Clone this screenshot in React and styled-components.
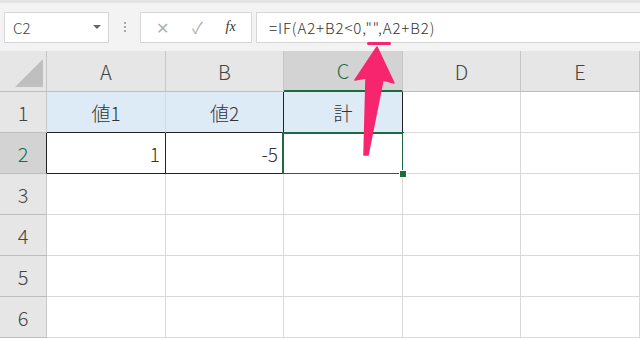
import React from "react";
import styled, { createGlobalStyle } from "styled-components";

const GlobalStyle = createGlobalStyle`
  html, body { margin: 0; padding: 0; background: #fff; }
  body { font-family: "Noto Sans CJK JP", "Noto Sans", sans-serif; }
`;

const Page = styled.div`
  position: relative;
  width: 640px;
  height: 339px;
  overflow: hidden;
`;

const Toolbar = styled.div`
  height: 51px;
  box-sizing: border-box;
  background: #f3f3f3;
  border-top: 3px solid #e4e4e4;
  display: flex;
  align-items: center;
  padding: 0 0 0 4px;
  gap: 4px;
`;

const Box = styled.div`
  height: 31px;
  box-sizing: border-box;
  background: #fff;
  border: 1px solid #d6d6d6;
  display: flex;
  align-items: center;
`;

const NameBox = styled(Box)`
  width: 105px;
  padding: 0 7px 0 8px;
  justify-content: space-between;
  font-size: 15px;
  font-weight: 300;
  color: #444;
`;

const Caret = styled.span`
  width: 0;
  height: 0;
  border-left: 4px solid transparent;
  border-right: 4px solid transparent;
  border-top: 4px solid #666;
`;

const Grip = styled.div`
  width: 23px;
  display: flex;
  flex-direction: column;
  align-items: center;
  gap: 2px;
  span {
    width: 2px;
    height: 2px;
    background: #a8a8a8;
  }
`;

const Buttons = styled(Box)`
  width: 112px;
  justify-content: space-around;
  padding: 0 4px;
  color: #b0b0b0;
  font-size: 16px;
`;

const Fx = styled.span`
  font-family: "Liberation Serif", serif;
  font-style: italic;
  font-size: 14px;
  color: #333;
`;

const Formula = styled(Box)`
  flex: 1;
  border-right: none;
  padding-left: 12px;
  font-size: 15px;
  font-weight: 300;
  color: #333;
  letter-spacing: 0.9px;
`;

const Grid = styled.div`
  display: grid;
  grid-template-columns: 47px 119px 118px 119px 118px 119px;
  grid-auto-rows: 41px;
`;

const Cell = styled.div`
  position: relative;
  box-sizing: border-box;
  display: flex;
  align-items: center;
  justify-content: ${(p) => p.$align || "center"};
  padding: 0 5px;
  font-size: 19px;
  font-weight: 300;
  color: #333;
  background: ${(p) => p.$fill || "#fff"};
  border-right: 1px solid ${(p) => p.$right || "#d9d9d9"};
  border-bottom: 1px solid ${(p) => p.$bottom || "#d9d9d9"};
`;

const Head = styled(Cell)`
  background: ${(p) => (p.$active ? "#d3d3d3" : "#e6e6e6")};
  color: ${(p) => (p.$active ? "#1e6b41" : "#444")};
  border-right: 1px solid ${(p) => p.$right || "#c6c6c6"};
  border-bottom: ${(p) => (p.$active && p.$col ? "2px solid #1e6b41" : `1px solid ${p.$bottom || "#bdbdbd"}`)};
  font-size: 20px;
`;

const Corner = styled(Head)`
  &::after {
    content: "";
    position: absolute;
    right: 3px;
    bottom: 4px;
    width: 0;
    height: 0;
    border-left: 28px solid transparent;
    border-bottom: 28px solid #bfbfbf;
  }
`;

const Selected = styled(Cell)`
  &::after {
    content: "";
    position: absolute;
    top: -1px;
    left: -2px;
    right: -2px;
    bottom: -2px;
    border: 2px solid #1e6b41;
  }
  &::before {
    content: "";
    position: absolute;
    right: -5px;
    bottom: -5px;
    width: 6px;
    height: 6px;
    background: #1e6b41;
    border: 1px solid #fff;
    z-index: 1;
  }
`;

const Overlay = styled.svg`
  position: absolute;
  left: 0;
  top: 0;
  pointer-events: none;
`;

const cols = ["A", "B", "C", "D", "E"];
const BLUE = "#ddebf7";
const DARK = "#222";

export default function App() {
  return (
    <Page>
      <GlobalStyle />
      <Toolbar>
        <NameBox>
          C2
          <Caret />
        </NameBox>
        <Grip>
          <span />
          <span />
          <span />
        </Grip>
        <Buttons>
          <span>✕</span>
          <span>✓</span>
          <Fx>fx</Fx>
        </Buttons>
        <Formula>=IF(A2+B2&lt;0,"",A2+B2)</Formula>
      </Toolbar>
      <Grid>
        <Corner />
        {cols.map((c) => (
          <Head key={c} $col $active={c === "C"}>
            {c}
          </Head>
        ))}

        <Head>1</Head>
        <Cell $fill={BLUE} $bottom={DARK}>値1</Cell>
        <Cell $fill={BLUE} $bottom={DARK} $right={DARK}>値2</Cell>
        <Cell $fill={BLUE} $right={DARK} $bottom={DARK}>計</Cell>
        <Cell />
        <Cell />

        <Head $active $right={DARK}>2</Head>
        <Cell $align="flex-end" $right={DARK} $bottom={DARK}>1</Cell>
        <Cell $align="flex-end" $right={DARK} $bottom={DARK}>-5</Cell>
        <Selected $bottom={DARK} $right={DARK} />
        <Cell />
        <Cell />

        {[3, 4, 5, 6].map((r) => (
          <React.Fragment key={r}>
            <Head>{r}</Head>
            {cols.map((c) => (
              <Cell key={c} />
            ))}
          </React.Fragment>
        ))}
      </Grid>
      <Overlay width="640" height="339" viewBox="0 0 640 339">
        <rect x="367" y="42" width="24" height="3" rx="1.5" fill="#f7256e" />
        <polygon
          points="377,47 394,83 383,80 368,155 364,155 366,78 355,80"
          fill="#f7256e"
          strokeLinejoin="round"
          stroke="#f7256e"
          strokeWidth="1.5"
        />
      </Overlay>
    </Page>
  );
}
